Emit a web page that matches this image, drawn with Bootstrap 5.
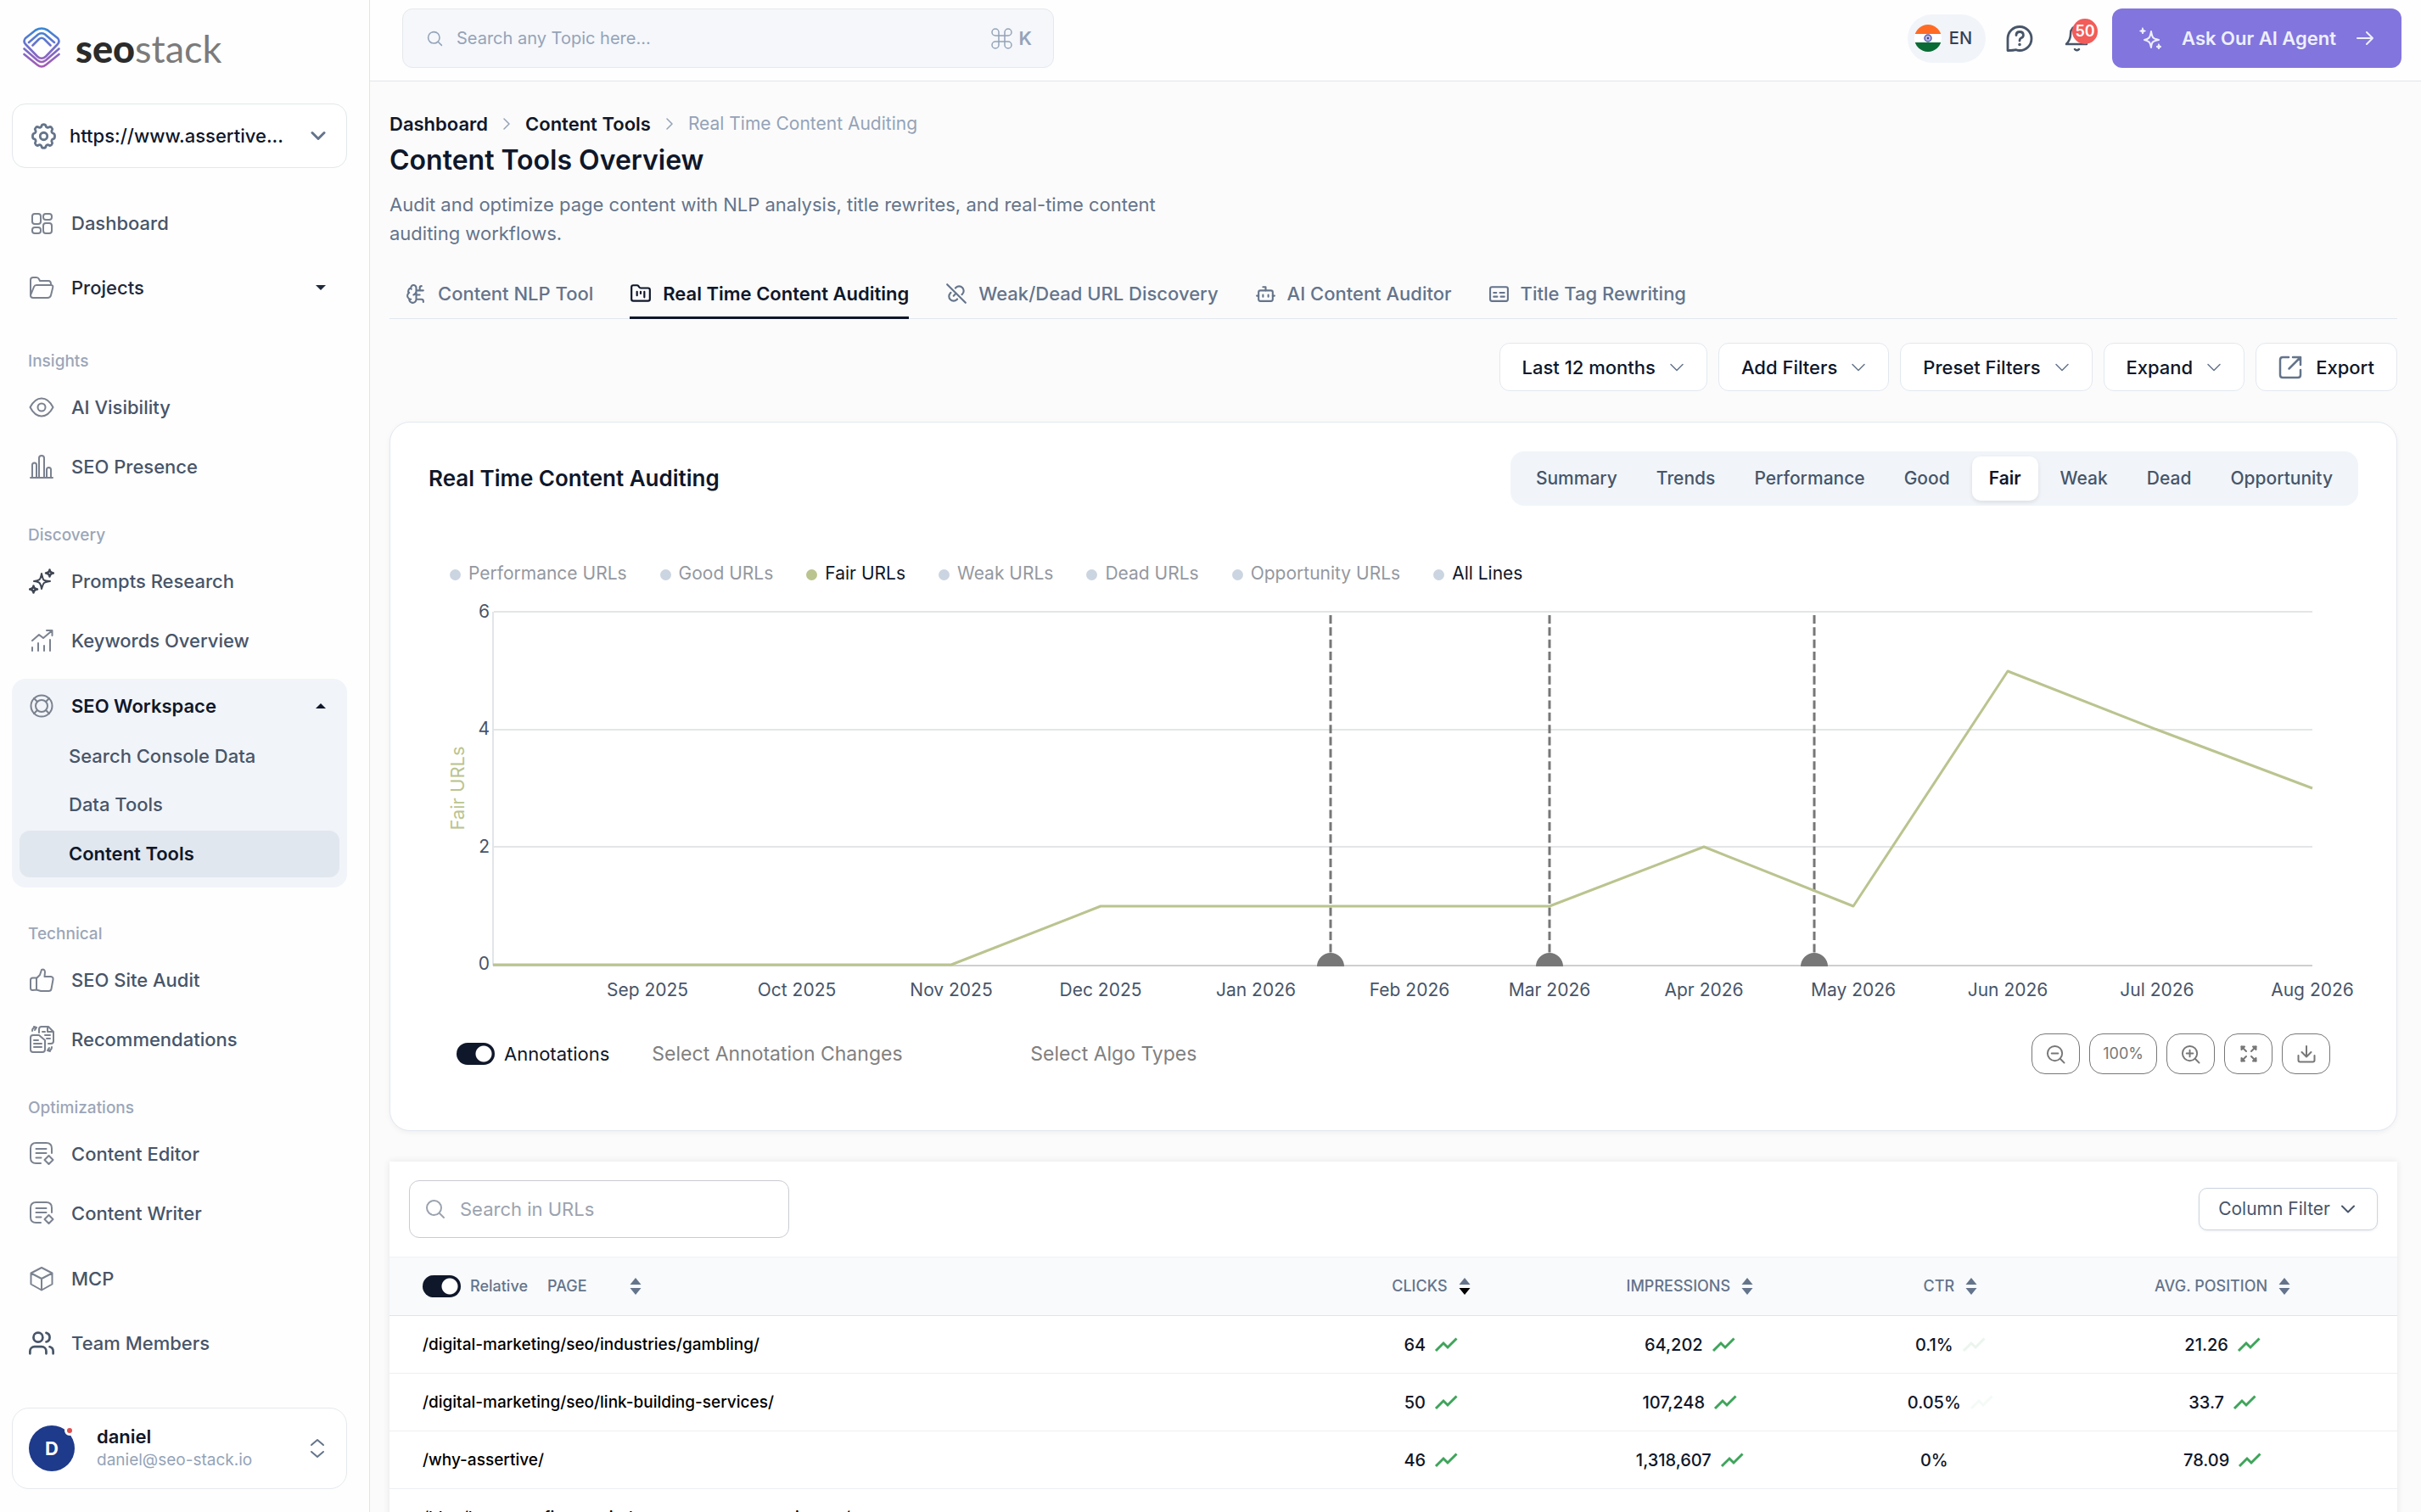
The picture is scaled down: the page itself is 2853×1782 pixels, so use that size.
<!DOCTYPE html>
<html lang="en">
<head>
<meta charset="utf-8">
<meta name="viewport" content="width=device-width, initial-scale=1">
<title>Content Tools Overview</title>
<link href="https://cdn.jsdelivr.net/npm/bootstrap@5.3.0/dist/css/bootstrap.min.css" rel="stylesheet">
<style>
body{font-family:Inter,"Liberation Sans",sans-serif;font-size:22px;line-height:34px;color:#0f172a;background:#fbfbfb}
a{text-decoration:none;color:inherit}
button{font:inherit;color:inherit}
svg{flex:none}
.ico{fill:none;stroke:currentColor;stroke-width:2;stroke-linecap:round;stroke-linejoin:round}
.thin{stroke-width:1.5}
.bold-ico{stroke-width:3}

/* sidebar */
.side{width:436px;background:#fefefe;border-right:1px solid #e1e5e8;padding:32px 26px 27px 14px}
.brand{height:50px;padding-left:13px;gap:18px;font-family:Lato,sans-serif;font-size:45px;line-height:50px;color:#7b7b7b;margin-bottom:40px}
.brand b{font-weight:900;color:#2b2b2b}
.site-btn{height:76px;border:1px solid #e2e8ea;border-radius:16px;background:#fff;padding:0 24px 0 21px;gap:15px;font-weight:500;margin-bottom:27px}
.side-link{height:70px;padding:0 25px 0 20px;gap:20px;font-weight:500;color:#475569}
.side-link svg{color:#7b828f}
.side-link.tall{height:76px}
.side-link.dark{color:#1e293b}
.side-label{height:40px;line-height:42px;padding-left:19px;margin-top:25px;font-size:19px;font-weight:500;color:#9ca6b8}
.side-label.first{margin-top:28px}
.work{background:#f1f4f9;border-radius:16px;height:246px;margin:10px 0 34px;padding:0 9px}
.work .side-link{height:63px;padding:0 16px 0 11px;color:#0f172a;font-weight:600}
.sub-link{display:block;height:57px;line-height:57px;padding-left:58px;color:#475569;font-weight:500}
.sub-link.active{height:55px;line-height:55px;margin-top:2px;background:#e1e7ef;border-radius:12px;color:#0f172a;font-weight:600}
.user{height:96px;border:1px solid #e5e9ed;border-radius:20px;background:#fff;padding:0 25px 0 19px}
.avatar{width:54px;height:54px;border-radius:50%;background:#1e3a8a;color:#fff;font-weight:700;margin-right:26px}
.avatar i{position:absolute;right:0;top:0;box-sizing:content-box;width:6px;height:6px;border-radius:50%;background:#e04f4f;border:3px solid #fff}
.user-name{font-weight:600;line-height:28px}
.user-mail{font-size:19px;line-height:28px;color:#94a3b8}

/* top bar */
.top{height:96px;background:#fefefe;border-bottom:1px solid #e1e5e8;padding:10px 23px 15px 38px}
.topic{width:768px;height:70px;background:#f5f7fb;border:1px solid #e4e9ed;border-radius:12px;padding:0 25px 0 28px;color:#94a3b8}
.topic input,.find input,.pick{border:0;background:none;outline:0;padding:0;min-width:0}
.topic input{font-size:20px}
input::placeholder{color:#94a3b8;opacity:1}
.lang{height:57px;border-radius:29px;background:#f1f4f9;padding:0 16px 0 8px;gap:9px;font-size:20px;font-weight:500;border:0;color:#334155}
.help-btn{margin-left:23px;color:#475569}
.bell-btn{margin:0 26px 0 36px;color:#475569}
.bell-count{left:9px;top:-6px;width:30px;height:30px;border-radius:50%;background:#f25c59;color:#fff;font-size:18px;line-height:30px;font-weight:600;text-align:center}
.ask{height:70px;border:0;border-radius:12px;background:#8275de;color:#eef0ff;padding:0 32px;gap:23px;font-weight:600}

/* content */
.page{padding:32px 28px 0 23px}
.crumbs{gap:17px;height:36px;font-weight:600}
.crumbs svg{color:#94a3b8}
.crumbs span{color:#94a3b8;font-weight:400;font-size:21px}
h1{font-size:32px;line-height:40px;font-weight:600;margin:5px 0 15px}
.intro{max-width:960px;color:#64748b;margin-bottom:16px}
.tabs{height:68px;gap:43px;padding-left:19px;border-bottom:1px solid #e2e8f0}
.tabs a{height:68px;gap:13px;padding-top:11px;color:#64748b;font-weight:500;border-bottom:3px solid transparent}
.tabs a.active{color:#0f172a;font-weight:600;border-color:#0f172a}
.filters{gap:13px;margin:28px 0 36px}
.tool-btn{height:57px;padding:0 26px;gap:16px;border:1px solid #e2e8f0;border-radius:12px;background:#fff;font-weight:500}
.tool-btn svg{color:#64748b}
.panel{background:#fff;border:1px solid #e2e8f0;border-radius:24px;box-shadow:0 2px 6px rgba(15,23,42,.05);padding:34px 45px 66px}
h2{font-size:26px;line-height:34px;font-weight:600;margin:0}
.seg{background:#f1f5f9;border-radius:16px;padding:6px 10px;gap:6px}
.seg button{height:52px;border:0;background:none;border-radius:10px;padding:0 20px;font-size:21px;font-weight:500;color:#475569}
.seg button.active{background:#fff;color:#0f172a;font-weight:600;box-shadow:0 2px 5px rgba(15,23,42,.1)}
.legend{gap:39px;padding-left:25px;margin-top:63px;color:#94989f;font-size:21px}
.legend button{border:0;background:none;padding:0;gap:9px}
.legend i{width:13px;height:13px;border-radius:50%;background:#cbd5e1;margin-top:2px}
.legend .on{color:#0f172a}
.legend .fair i{background:#bac48f}
.plot{display:block;width:100%;height:auto;margin-top:4px}
.plot text{font-size:21px;fill:#475569}
.below{margin-top:26px;padding:0 33px 0 33px}
.form-check-input.tog{width:45px;height:26px;border:0;margin:0;float:none;background-color:#0f172a;background-image:radial-gradient(circle at 32px 50%,#fff 9px,transparent 10px);border-radius:13px;flex:none}
.ann-box{min-height:0;gap:11px;margin-right:50px}
.pick{color:#808080;font-size:23px;width:446px}
.pick::placeholder{color:#808080}
.zoom{height:48px;min-width:57px;border:1px solid #777;border-radius:16px;background:#fff;color:#777;font-size:18px;padding:0 15px}
.zoom-set{gap:11px}
.grid-card{background:#fff;margin-top:36px;box-shadow:0 0 8px rgba(15,23,42,.09)}
.grid-top{padding:22px 23px}
.find{width:448px;height:68px;border:1px solid #c9ccd1;border-radius:12px;padding:0 18px;gap:17px;color:#9ca3af}
.find input::placeholder{color:#9ca3af}
.colf{height:50px;border:1px solid #cbd5e1;border-radius:10px;background:#fff;color:#475569;font-size:21px;padding:0 25px 0 22px;gap:12px;box-shadow:0 1px 3px rgba(15,23,42,.08)}
.list{table-layout:fixed;margin:0;width:100%}
.list th{height:69px;background:#f8fafc;border-top:1px solid #eef2f6;border-bottom:1px solid #dfe5ec;font-size:18px;font-weight:500;color:#64748b;padding:0}
.list td{height:68px;border-bottom:1px solid #eceff2;font-size:20px;font-weight:500;padding:0;background:#fff;color:#0f172a}
.list td:first-child,.list th:first-child{padding-left:39px}
.list td:first-child{color:#000;white-space:nowrap;font-size:19px}
.cell{display:flex;align-items:center;justify-content:center;gap:10px}
th .cell{gap:13px}
.page-head label{margin:0 23px 0 11px}
.page-head svg{margin-left:50px}
</style>
</head>
<body>
<svg width="0" height="0" class="position-absolute" aria-hidden="true">
<symbol id="down" viewBox="0 0 18 18"><path d="M2 5.500l7 7 7-7"/></symbol>
<symbol id="sort" viewBox="0 0 14 20"><path d="M7 0l6.500 8H.5z"/><path d="M7 20l6.500-8H.5z" fill="var(--lo,#64748b)"/></symbol>
<symbol id="rise" viewBox="0 0 28 18"><path d="M2 16l9-9 5 5L26.500 1.500" fill="none" stroke="#3fa45b" stroke-width="3"/></symbol>
<symbol id="mag" viewBox="0 0 24 24"><circle cx="10.500" cy="10.500" r="8.500"/><path d="M17 17l5 5"/></symbol>
<symbol id="doc" viewBox="0 0 30 30"><path d="M14 26H8.500Q2 26 2 19.500V8.500Q2 2 8.500 2h12Q27 2 27 8.500V14M8.500 9h12M8.500 14h12M8.500 19.500h6M23.500 17l5 5-5 5-5-5z"/></symbol>
</svg>

<div class="d-flex vh-100 overflow-hidden">
<aside class="side d-flex flex-column flex-shrink-0">
  <a href="#" class="brand d-flex align-items-center">
    <svg width="44" height="50" viewBox="0 0 44 50" fill="none" stroke="url(#lg)" stroke-width="2.600" stroke-linecap="round" stroke-linejoin="round"><defs><linearGradient id="lg" x1="0" y1="0" x2="0" y2="50" gradientUnits="userSpaceOnUse"><stop stop-color="#3388d6"/><stop offset=".45" stop-color="#6f70cc"/><stop offset="1" stop-color="#ae57b2"/></linearGradient></defs>
    <path d="M3 13L15 3.500Q22-.5 29 3.500L41 13Q44 16.500 41 20L27 34.500Q22 39 17 34.500L3 20Q0 16.500 3 13z"/><path d="M7 18L18 8.500Q22 6 26 8.500L37 18M11.500 21.500l7.500-7.500Q22 11.500 25 14l7.500 7.500M1.500 25.500L17 39Q22 43 27 39L42.500 25.500M1.500 32L17 44.500Q22 48.500 27 44.500L42.500 32"/></svg>
    <span><b>seo</b>stack</span>
  </a>
  <button class="site-btn d-flex align-items-center" type="button">
    <svg class="ico" width="31" height="31" viewBox="1 1 22 22" color="#64748b"><circle cx="12" cy="12" r="3"/><path d="M10.300 3.200c.3-1.400 3.100-1.400 3.400 0 .3 1.500 1.700 2 2.900 1.200 1.300-.8 3.200 1.100 2.400 2.400-.8 1.200-.3 2.600 1.200 2.900 1.400.3 1.400 4.300 0 4.600-1.500.3-2 1.700-1.200 2.900.8 1.300-1.100 3.200-2.400 2.400-1.200-.8-2.600-.3-2.900 1.200-.3 1.400-3.100 1.400-3.400 0-.3-1.500-1.700-2-2.900-1.200-1.300.8-3.200-1.100-2.400-2.400.8-1.200.3-2.600-1.200-2.900-1.400-.3-1.400-4.300 0-4.600 1.500-.3 2-1.700 1.200-2.900-.8-1.300 1.100-3.200 2.400-2.400 1.200.8 2.600.3 2.900-1.200z"/></svg>
    <span class="flex-grow-1 text-start">https://www.assertive...</span>
    <svg class="ico bold-ico" width="18" height="18" color="#64748b"><use href="#down"/></svg>
  </button>
  <nav>
    <a href="#" class="side-link tall d-flex align-items-center"><svg class="ico" width="30" height="30" viewBox="0 0 30 30"><rect x="4" y="4" width="10" height="12" rx="3"/><rect x="17" y="4" width="10" height="7" rx="3"/><rect x="4" y="20" width="10" height="7" rx="3"/><rect x="17" y="15" width="10" height="12" rx="3"/></svg>Dashboard</a>
    <a href="#" class="side-link tall dark d-flex align-items-center"><svg class="ico" width="30" height="30" viewBox="0 0 30 30"><path d="M2 24V6q0-3 3-3h4q2 0 3 2l1 2h10q3 0 3 4M2 24l4-10q.8-2 3-2h17q3 0 2.200 3L26 24q-.8 3-4 3H5q-3 0-3-3z"/></svg><span class="flex-grow-1">Projects</span><svg width="12" height="6" viewBox="0 0 12 6"><path d="M0 0h12L6 6z" fill="#1e293b"/></svg></a>
    <div class="side-label first">Insights</div>
    <a href="#" class="side-link d-flex align-items-center"><svg class="ico" width="30" height="30" viewBox="0 0 30 30"><path d="M1.500 15Q7 4.500 15 4.500T28.500 15Q23 25.500 15 25.500T1.500 15z"/><circle cx="15" cy="15" r="4.500"/></svg>AI Visibility</a>
    <a href="#" class="side-link d-flex align-items-center"><svg class="ico" width="30" height="30" viewBox="0 0 30 30"><path d="M2 28h26M4 28V13q0-2.500 2.500-2.500T9 13v15M12 28V5q0-3 3-3t3 3v23M21 28V18.500q0-2.500 2.500-2.500t2.500 2.500V28"/></svg>SEO Presence</a>
    <div class="side-label">Discovery</div>
    <a href="#" class="side-link d-flex align-items-center"><svg class="ico" width="30" height="30" viewBox="0 0 30 30"><g stroke="#3f4653"><path d="M15 6q1.500 6.500 2.500 7.500T25 15q-6.500 1-7.500 2.500T15 24q-1-5.500-2.500-7T6 15q5-.8 6.500-2T15 6z"/><path d="M24.500 1.500Q25 5 29 5.500 25 6 24.500 9.500 24 6 20 5.500 24 5 24.500 1.500zM5.500 20.500Q6 24 10 24.500 6 25 5.500 28.500 5 25 1 24.500 5 24 5.500 20.500z" stroke-width="2.500"/></g></svg>Prompts Research</a>
    <a href="#" class="side-link d-flex align-items-center"><svg class="ico" width="30" height="30" viewBox="0 0 30 30"><path d="M4 15l8-7 5 4L27 3.500M21 3h6.500v6M4 23v4M11 18v9M18 21v6M25 14v13"/></svg>Keywords Overview</a>
    <div class="work">
      <a href="#" class="side-link d-flex align-items-center"><svg class="ico" width="30" height="30" viewBox="0 0 30 30"><circle cx="15" cy="15" r="12.500"/><circle cx="15" cy="15" r="7"/><path d="M6 6l4 4M24 6l-4 4M6 24l4-4M24 24l-4-4"/></svg><span class="flex-grow-1">SEO Workspace</span><svg width="12" height="6" viewBox="0 0 12 6"><path d="M0 6h12L6 0z" fill="#0f172a"/></svg></a>
      <a href="#" class="sub-link">Search Console Data</a>
      <a href="#" class="sub-link">Data Tools</a>
      <a href="#" class="sub-link active">Content Tools</a>
    </div>
    <div class="side-label">Technical</div>
    <a href="#" class="side-link d-flex align-items-center"><svg class="ico" width="30" height="30" viewBox="0 0 30 30"><path d="M9 13l4-4 2-6q3.500-1.500 4 2.500L18.500 11H26q3 .5 2.500 3.500l-2 11q-.5 2.500-3 2.500H14l-5-1.500zM9 12.500v14L4.500 27Q2 27 2 24.500V15q0-2.500 2.500-2.500z"/></svg>SEO Site Audit</a>
    <a href="#" class="side-link d-flex align-items-center"><svg class="ico" width="30" height="32" viewBox="0 0 30 32"><path d="M2 14q0-3 3-3h7l7 6v11q0 3-3 3H5q-3 0-3-3zM6 17h5M6 21h9M6 25h9M12 8V4q0-3 3-3h8l6 6v11q0 3-3 3h-3M22 1v6h6M16 7h3M19 11h6M21 15h4M4 6q0-4 4-4M6 1l3 1-2 3M27 25q0 4-4 4M25 30l-3-1 2-3"/></svg>Recommendations</a>
    <div class="side-label">Optimizations</div>
    <a href="#" class="side-link d-flex align-items-center"><svg class="ico" width="30" height="30"><use href="#doc"/></svg>Content Editor</a>
    <a href="#" class="side-link d-flex align-items-center"><svg class="ico" width="30" height="30"><use href="#doc"/></svg>Content Writer</a>
    <a href="#" class="side-link tall d-flex align-items-center mt-1"><svg class="ico" width="30" height="30" viewBox="0 0 30 30"><path d="M15 2l12.500 6.500v13L15 28.500 2.500 21.500v-13zM2.500 8.500L15 15l12.500-6.500M15 15v13.500"/></svg>MCP</a>
    <a href="#" class="side-link tall d-flex align-items-center"><svg class="ico" width="30" height="30" viewBox="1 1 22 22"><g stroke="#475569"><path d="M16 21v-2a4 4 0 0 0-4-4H6a4 4 0 0 0-4 4v2"/><circle cx="9" cy="7" r="4"/><path d="M22 21v-2a4 4 0 0 0-3-3.870M16 3.130a4 4 0 0 1 0 7.750"/></g></svg>Team Members</a>
  </nav>
  <div class="user d-flex align-items-center mt-auto">
    <div class="avatar d-flex align-items-center justify-content-center position-relative">D<i></i></div>
    <div class="flex-grow-1"><div class="user-name">daniel</div><div class="user-mail">daniel@seo-stack.io</div></div>
    <svg class="ico" width="18" height="24" viewBox="0 0 18 24" color="#64748b"><path d="M2 8l7-6 7 6M2 16l7 6 7-6"/></svg>
  </div>
</aside>

<div class="flex-grow-1" style="min-width:0">
<header class="top d-flex align-items-center">
  <label class="topic d-flex align-items-center">
    <svg class="ico me-3" width="19" height="19"><use href="#mag"/></svg>
    <input class="flex-grow-1" type="text" placeholder="Search any Topic here...">
    <svg class="ico thin me-2" width="25" height="25" viewBox="0 0 25 25"><path d="M9 9V5a4 4 0 1 0-4 4h15a4 4 0 1 0-4-4v15a4 4 0 1 0 4-4H5a4 4 0 1 0 4 4z"/></svg><b class="fw-semibold">K</b>
  </label>
  <div class="d-flex align-items-center ms-auto">
    <button class="lang d-flex align-items-center" type="button"><svg width="32" height="32" viewBox="0 0 32 32"><clipPath id="fl"><circle cx="16" cy="16" r="16"/></clipPath><g clip-path="url(#fl)"><path d="M0 0h32v32H0z" fill="#fff"/><path d="M0 0h32v11H0z" fill="#ff6b24"/><path d="M0 21h32v11H0z" fill="#0a6b35"/></g><circle cx="16" cy="16" r="4" fill="#b9b8e0" stroke="#5c5bb0" stroke-width="1.500"/><circle cx="16" cy="16" r="1.200" fill="#3c3b92"/></svg>EN</button>
    <button class="btn p-0 border-0 d-flex help-btn" type="button" aria-label="Help"><svg class="ico" width="34" height="34" viewBox="0 0 34 34"><path d="M3 31.500V17A14 14 0 1 1 17 31.500q-2 0-4-.8-3 .8-10 .8zM13 13.500q0-4 4.200-4t4.200 4q0 2.500-3 3.500-1.400.8-1.400 3" stroke-width="2.800"/><circle cx="17" cy="24.500" r=".8"/></svg></button>
    <button class="btn p-0 border-0 position-relative d-flex bell-btn" type="button" aria-label="Notifications"><svg class="ico" width="30" height="34" viewBox="0 0 30 34"><path d="M15 3q-8 0-8 9.500 0 6.500-5 11.500h24M12 30q2 2.500 5 0" stroke-width="2.500"/></svg><span class="bell-count position-absolute">50</span></button>
    <button class="ask d-flex align-items-center" type="button"><svg class="ico" width="27" height="27" viewBox="0 0 27 27"><path d="M14 5q1 6 2.500 7.500T23 15q-5.500 1-7 2.500T14 24q-.8-5-2.500-6.500T6 15q4-.8 5.500-2.500T14 5z"/><path d="M4 1l1 2.500L7.500 4.500 5 5.500 4 8 3 5.500.5 4.500 3 3.500zM23 20l1 2 2 1-2 1-1 2-1-2-2-1 2-1z" fill="currentColor" stroke-width="1"/></svg>Ask Our AI Agent<svg class="ico" width="22" height="18" viewBox="0 0 22 18"><path d="M2 9h18M13 2l7 7-7 7"/></svg></button>
  </div>
</header>

<main class="page">
  <nav class="crumbs d-flex align-items-center" aria-label="breadcrumb"><a href="#">Dashboard</a><svg class="ico thin" width="10" height="14" viewBox="0 0 10 14"><path d="M2 1l6 6-6 6"/></svg><a href="#">Content Tools</a><svg class="ico thin" width="10" height="14" viewBox="0 0 10 14"><path d="M2 1l6 6-6 6"/></svg><span>Real Time Content Auditing</span></nav>
  <h1>Content Tools Overview</h1>
  <p class="intro">Audit and optimize page content with NLP analysis, title rewrites, and real-time content auditing workflows.</p>
  <nav class="tabs d-flex">
    <a href="#" class="d-flex align-items-center"><svg class="ico" width="25" height="25" viewBox="0 0 24 24"><path d="M12 5a3 3 0 1 0-5.997.125 4 4 0 0 0-2.526 5.770 4 4 0 0 0 .556 6.588A4 4 0 1 0 12 18zM9 13a4.500 4.500 0 0 0 3-4M6 5.125A3 3 0 0 0 6.400 6.500M3.480 10.900a4 4 0 0 1 .585-.4M6 18a4 4 0 0 1-1.970-.5M12 13h4M12 18h6a2 2 0 0 1 2 2v1M12 8h8M16 8V5a2 2 0 0 1 2-2"/></svg>Content NLP Tool</a>
    <a href="#" class="active d-flex align-items-center"><svg class="ico" width="26" height="26" viewBox="0 0 24 24"><path d="M4 20h16a2 2 0 0 0 2-2V8a2 2 0 0 0-2-2h-7.930a2 2 0 0 1-1.660-.9l-.82-1.200A2 2 0 0 0 7.930 3H4a2 2 0 0 0-2 2v13c0 1.100.9 2 2 2zM8 10v4M12 10v2M16 10v6"/></svg>Real Time Content Auditing</a>
    <a href="#" class="d-flex align-items-center"><svg class="ico" width="26" height="26" viewBox="0 0 24 24"><path d="M9 14.500l1.500-1.500M11 6l.463-.536a5 5 0 0 1 7.071 7.072L18 13M2 2l20 20M13 18l-.4.534a5.068 5.068 0 0 1-7.127 0 4.972 4.972 0 0 1 0-7.071L6 11"/></svg>Weak/Dead URL Discovery</a>
    <a href="#" class="d-flex align-items-center"><svg class="ico" width="25" height="25" viewBox="0 0 24 24"><path d="M12 8V4H9"/><rect x="4" y="8" width="16" height="12" rx="2"/><path d="M2 14h2M20 14h2M15 13v2M9 13v2"/></svg>AI Content Auditor</a>
    <a href="#" class="d-flex align-items-center"><svg class="ico" width="25" height="25" viewBox="0 0 24 24"><rect x="2" y="4" width="20" height="16" rx="2"/><path d="M6 15h4M14 15h4M6 10.500h3M13 10.500h5"/></svg>Title Tag Rewriting</a>
  </nav>
  <div class="filters d-flex justify-content-end">
    <button class="tool-btn d-flex align-items-center" type="button">Last 12 months<svg class="ico thin" width="18" height="18"><use href="#down"/></svg></button>
    <button class="tool-btn d-flex align-items-center" type="button">Add Filters<svg class="ico thin" width="18" height="18"><use href="#down"/></svg></button>
    <button class="tool-btn d-flex align-items-center" type="button">Preset Filters<svg class="ico thin" width="18" height="18"><use href="#down"/></svg></button>
    <button class="tool-btn d-flex align-items-center" type="button">Expand<svg class="ico thin" width="18" height="18"><use href="#down"/></svg></button>
    <button class="tool-btn d-flex align-items-center" type="button"><svg class="ico" width="28" height="28" viewBox="0 0 28 28"><path stroke-width="2.500" d="M12 2H5Q2 2 2 5v18q0 3 3 3h18q3 0 3-3v-6M17 2h9v9M26 2L12.500 15.500"/></svg>Export</button>
  </div>

  <section class="panel">
    <div class="d-flex align-items-center justify-content-between">
      <h2>Real Time Content Auditing</h2>
      <div class="seg d-flex">
        <button type="button">Summary</button><button type="button">Trends</button><button type="button">Performance</button><button type="button">Good</button><button type="button" class="active">Fair</button><button type="button">Weak</button><button type="button">Dead</button><button type="button">Opportunity</button>
      </div>
    </div>
    <div class="legend d-flex">
      <button type="button" class="d-flex align-items-center"><i></i>Performance URLs</button>
      <button type="button" class="d-flex align-items-center"><i></i>Good URLs</button>
      <button type="button" class="d-flex align-items-center on fair"><i></i>Fair URLs</button>
      <button type="button" class="d-flex align-items-center"><i></i>Weak URLs</button>
      <button type="button" class="d-flex align-items-center"><i></i>Dead URLs</button>
      <button type="button" class="d-flex align-items-center"><i></i>Opportunity URLs</button>
      <button type="button" class="d-flex align-items-center on"><i></i>All Lines</button>
    </div>
    <svg class="plot" viewBox="505 697 2274 495" role="img" aria-label="Fair URLs by month">
      <path d="M582 721h2143M582 860h2143M582 998h2143" stroke="#e4e5e6" stroke-width="2"/>
      <path d="M581 721v417" stroke="#e2e5e8" stroke-width="2"/>
      <path d="M581 1138h2144" stroke="#cfcfcf" stroke-width="2"/>
      <g text-anchor="end"><text x="577" y="728">6</text><text x="577" y="866">4</text><text x="577" y="1005">2</text><text x="577" y="1143">0</text></g>
      <text transform="translate(547 929) rotate(-90)" text-anchor="middle" style="fill:#bac48f;font-size:22px">Fair URLs</text>
      <path d="M1568 725v412M1826 725v412M2138 725v412" stroke="#777" stroke-width="3" stroke-dasharray="10 4.350"/>
      <g fill="#777"><path d="M1552 1139a16 16 0 0 1 32 0zM1810 1139a16 16 0 0 1 32 0zM2122 1139a16 16 0 0 1 32 0z"/></g>
      <path d="M581 1137H1121L1297 1068H1826L2008 998L2184 1068L2366 791L2542 860L2725 929" fill="none" stroke="#bac48f" stroke-width="3" stroke-linejoin="round"/>
      <g text-anchor="middle"><text x="763" y="1174">Sep 2025</text><text x="939" y="1174">Oct 2025</text><text x="1121" y="1174">Nov 2025</text><text x="1297" y="1174">Dec 2025</text><text x="1480" y="1174">Jan 2026</text><text x="1661" y="1174">Feb 2026</text><text x="1826" y="1174">Mar 2026</text><text x="2008" y="1174">Apr 2026</text><text x="2184" y="1174">May 2026</text><text x="2366" y="1174">Jun 2026</text><text x="2542" y="1174">Jul 2026</text><text x="2725" y="1174">Aug 2026</text></g>
    </svg>
    <div class="below d-flex align-items-center">
      <div class="form-switch d-flex align-items-center p-0 ann-box"><input class="form-check-input tog" type="checkbox" role="switch" id="ann" checked><label for="ann">Annotations</label></div>
      <input class="pick" type="text" aria-label="Annotation changes" placeholder="Select Annotation Changes">
      <input class="pick" type="text" aria-label="Algo types" placeholder="Select Algo Types">
      <div class="d-flex ms-auto zoom-set">
        <button class="zoom" type="button" aria-label="Zoom out"><svg class="ico d-block mx-auto" width="23" height="23" viewBox="0 0 24 24"><circle cx="11" cy="11" r="9"/><path d="M17.500 17.500L22.500 22.500M7 11h8"/></svg></button>
        <button class="zoom" type="button">100%</button>
        <button class="zoom" type="button" aria-label="Zoom in"><svg class="ico d-block mx-auto" width="23" height="23" viewBox="0 0 24 24"><circle cx="11" cy="11" r="9"/><path d="M17.500 17.500L22.500 22.500M7 11h8M11 7v8"/></svg></button>
        <button class="zoom" type="button" aria-label="Full screen"><svg class="ico d-block mx-auto" width="20" height="20" viewBox="0 0 20 20"><path d="M1.500 1.500l5.500 5.500M18.500 1.500L13 7M1.500 18.500L7 13M18.500 18.500L13 13"/><path d="M1.500 5V1.500H5zM15 1.500h3.500V5zM1.500 15v3.500H5zM15 18.500h3.500V15z" fill="currentColor"/></svg></button>
        <button class="zoom" type="button" aria-label="Download"><svg class="ico d-block mx-auto" width="22" height="22" viewBox="0 0 22 22"><path d="M11 2v12M5.500 9l5.500 5.500L16.500 9M1.500 13v5.500q0 2 2 2h15q2 0 2-2V13"/></svg></button>
      </div>
    </div>
  </section>

  <section class="grid-card">
    <div class="grid-top d-flex align-items-center justify-content-between">
      <label class="find d-flex align-items-center"><svg class="ico" width="24" height="24"><use href="#mag"/></svg><input class="flex-grow-1" type="text" placeholder="Search in URLs"></label>
      <button class="colf d-flex align-items-center" type="button">Column Filter<svg class="ico" width="18" height="18"><use href="#down"/></svg></button>
    </div>
    <table class="list">
      <colgroup><col style="width:47.100%"><col style="width:9.550%"><col style="width:16.230%"><col style="width:9.720%"><col style="width:17.400%"></colgroup>
      <thead><tr>
        <th><div class="d-flex align-items-center page-head"><input class="form-check-input tog" type="checkbox" id="rel" checked><label for="rel">Relative</label>PAGE<svg width="14" height="20" fill="#64748b"><use href="#sort"/></svg></div></th>
        <th><div class="cell">CLICKS<svg width="14" height="20" fill="#64748b" style="--lo:#000"><use href="#sort"/></svg></div></th>
        <th><div class="cell">IMPRESSIONS<svg width="14" height="20" fill="#64748b"><use href="#sort"/></svg></div></th>
        <th><div class="cell">CTR<svg width="14" height="20" fill="#64748b"><use href="#sort"/></svg></div></th>
        <th><div class="cell">AVG. POSITION<svg width="14" height="20" fill="#64748b"><use href="#sort"/></svg></div></th>
      </tr></thead>
      <tbody>
        <tr><td>/digital-marketing/seo/industries/gambling/</td><td><div class="cell">64<svg width="28" height="18"><use href="#rise"/></svg></div></td><td><div class="cell">64,202<svg width="28" height="18"><use href="#rise"/></svg></div></td><td><div class="cell">0.1%<svg width="28" height="18" opacity=".1"><use href="#rise"/></svg></div></td><td><div class="cell">21.26<svg width="28" height="18"><use href="#rise"/></svg></div></td></tr>
        <tr><td>/digital-marketing/seo/link-building-services/</td><td><div class="cell">50<svg width="28" height="18"><use href="#rise"/></svg></div></td><td><div class="cell">107,248<svg width="28" height="18"><use href="#rise"/></svg></div></td><td><div class="cell">0.05%<svg width="28" height="18" opacity=".05"><use href="#rise"/></svg></div></td><td><div class="cell">33.7<svg width="28" height="18"><use href="#rise"/></svg></div></td></tr>
        <tr><td>/why-assertive/</td><td><div class="cell">46<svg width="28" height="18"><use href="#rise"/></svg></div></td><td><div class="cell">1,318,607<svg width="28" height="18"><use href="#rise"/></svg></div></td><td><div class="cell">0%<svg width="28" height="18" opacity="0"><use href="#rise"/></svg></div></td><td><div class="cell">78.09<svg width="28" height="18"><use href="#rise"/></svg></div></td></tr>
        <tr><td>/blog/how-can-finance-index-your-new-rooms-in-seo/</td><td></td><td></td><td></td><td></td></tr>
      </tbody>
    </table>
  </section>
</main>
</div>
</div>
<script src="https://cdn.jsdelivr.net/npm/bootstrap@5.3.0/dist/js/bootstrap.bundle.min.js"></script>
</body>
</html>
